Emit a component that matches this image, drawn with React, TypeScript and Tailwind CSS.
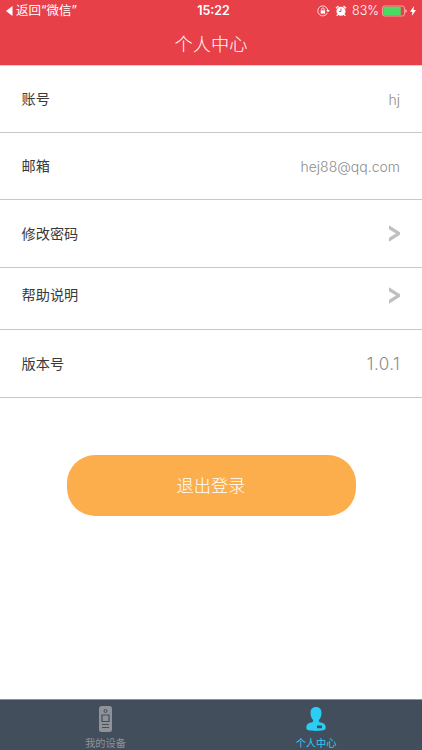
const rows = [
    { label: '账号', value: 'hj', style: 'h-[68px]', valueStyle: 'pt-px text-[14px]' },
    {
        label: '邮箱',
        value: 'hej88@qq.com',
        style: 'h-[67px]',
        valueStyle: 'text-[14px]',
    },
    { label: '修改密码', style: 'h-[68px]' },
    { label: '帮助说明', style: 'h-[62px] pb-[7px]' },
    {
        label: '版本号',
        value: '1.0.1',
        style: 'h-[68px]',
        valueStyle: 'pt-[2px] text-[17px] tracking-[0.4px]',
    },
]

function StatusBar() {
    return (
        <div className="grid h-[21px] grid-cols-3 items-center px-[6px] text-[12px] leading-none">
            <div className="flex items-center gap-[3px]">
                <svg width="7" height="10" viewBox="0 0 7 10" fill="currentColor">
                    <path d="M6.5 0v10L0 5z" />
                </svg>
                <span className="pt-[2px] text-[12.5px] whitespace-nowrap">
                    返回“微信”
                </span>
            </div>
            <div className="pt-[2px] pl-[5px] text-center text-[12.5px] font-semibold">
                15:22
            </div>
            <div className="flex items-center justify-end">
                <svg
                    width="13"
                    height="12"
                    viewBox="0 0 13 12"
                    fill="none"
                    stroke="currentColor"
                    strokeWidth="0.8"
                >
                    <path d="M10.4 7.8A5 5 0 1 1 10.7 5" />
                    <path d="M9.2 5h3.6l-1.8 2.2z" fill="currentColor" stroke="none" />
                    <path d="M4.6 5.5V4.3a1.3 1.3 0 0 1 2.6 0v1.2" />
                    <path d="M3.7 5.3h4.4v3.3H3.7z" fill="currentColor" stroke="none" />
                </svg>
                <svg className="ml-[5px]" width="12" height="12" viewBox="0 0 12 12">
                    <circle cx="6" cy="6.3" r="4.5" fill="currentColor" />
                    <path
                        d="M1 3.2L3.5 1M11 3.2L8.5 1M2.8 9.5l-1.1 1.4M9.2 9.5l1.1 1.4"
                        stroke="currentColor"
                        strokeWidth="1.3"
                    />
                    <path d="M6 3.6v2.9H3.9" fill="none" stroke="#e84049" strokeWidth="0.9" />
                </svg>
                <span className="ml-[5px] pt-[2px] text-[12.5px] font-light">83%</span>
                <svg className="ml-[3px]" width="25" height="12" viewBox="0 0 25 12">
                    <rect
                        x="0.5"
                        y="1"
                        width="22"
                        height="10"
                        rx="2"
                        fill="none"
                        stroke="#f8b5b8"
                        strokeWidth="0.8"
                    />
                    <rect x="1.3" y="1.8" width="17.5" height="8.4" rx="1" fill="#4cd964" />
                    <path d="M23.5 4.2c1.4.5 1.4 3.1 0 3.6z" fill="currentColor" />
                </svg>
                <svg className="ml-[3px]" width="6" height="10" viewBox="0 0 6 10" fill="currentColor">
                    <path d="M4 0L0 5.7h2.4L1.8 10 6 4.1H3.5z" />
                </svg>
            </div>
        </div>
    )
}

export default function App() {
    return (
        <div className="flex h-[750px] w-[422px] flex-col overflow-hidden bg-white font-['Inter','Noto_Sans_CJK_SC',sans-serif]">
            <header className="h-[66px] border-b border-[#f7c9cc] bg-[#e84049] text-white">
                <StatusBar />
                <h1 className="flex h-[48px] items-center justify-center text-[18.2px] font-light">
                    个人中心
                </h1>
            </header>

            <main className="flex flex-1 flex-col">
                <ul className="-mt-px">
                    {rows.map((row) => (
                        <li
                            key={row.label}
                            className={`flex items-center justify-between border-b border-[#c8c8c8] pr-[22px] pl-[21.5px] ${row.style}`}
                        >
                            <span className="text-[14.2px] leading-5 text-[#3a3a3a]">
                                {row.label}
                            </span>
                            {row.value ? (
                                <span className={`font-light text-[#8c8c8c] ${row.valueStyle}`}>
                                    {row.value}
                                </span>
                            ) : (
                                <svg
                                    width="11"
                                    height="17"
                                    viewBox="0 0 11 17"
                                    fill="#bfbfbf"
                                >
                                    <path d="M0 .3l11 7v2.4l-11 7v-3.9l7-4.3-7-4.3z" />
                                </svg>
                            )}
                        </li>
                    ))}
                </ul>
                <button className="mx-auto mt-[57px] h-[61px] w-[289px] rounded-[28px] bg-[#fcae4d] text-[17.2px] font-light text-white">
                    退出登录
                </button>
            </main>

            <nav className="grid h-[51px] grid-cols-2 border-t border-[#8e949c] bg-[#434e5d] text-[10.2px] leading-none">
                <a href="#" className="flex flex-col items-center pt-[6px] text-[#8f9296]">
                    <svg width="13" height="26" viewBox="0 0 13 26">
                        <rect width="13" height="26" rx="2.5" fill="currentColor" />
                        <g fill="none" stroke="#434e5d">
                            <circle cx="6.5" cy="5" r="1.5" />
                            <path d="M3 9h7v6.5H3z" strokeWidth="1.2" />
                            <path d="M3 18.5h7M3 21.5h7" strokeWidth="1.2" />
                        </g>
                    </svg>
                    <span className="mt-[6px]">我的设备</span>
                </a>
                <a
                    href="#"
                    className="flex flex-col items-center pt-[7px] pr-px text-[#2bcdf5]"
                >
                    <svg width="20" height="24" viewBox="0 0 20 24">
                        <path
                            d="M10 0C6.400 0 4.500 2.200 4.500 5.800c0 3.300 1 5.800 2.600 7.200v1.400c-.6 1-2.400 1-4.300 1.800C.9 17.100.3 18.800.3 21c0 2.400 3.700 2.900 9.700 2.900s9.700-.5 9.700-2.900c0-2.200-.6-3.900-2.500-4.800-1.900-.8-3.700-.8-4.300-1.800V13c1.600-1.400 2.600-3.900 2.600-7.200C15.500 2.200 13.600 0 10 0z"
                            fill="currentColor"
                        />
                        <rect x="11" y="18.5" width="5" height="2.8" rx="0.6" fill="#434e5d" />
                    </svg>
                    <span className="mt-[7px]">个人中心</span>
                </a>
            </nav>
        </div>
    )
}
